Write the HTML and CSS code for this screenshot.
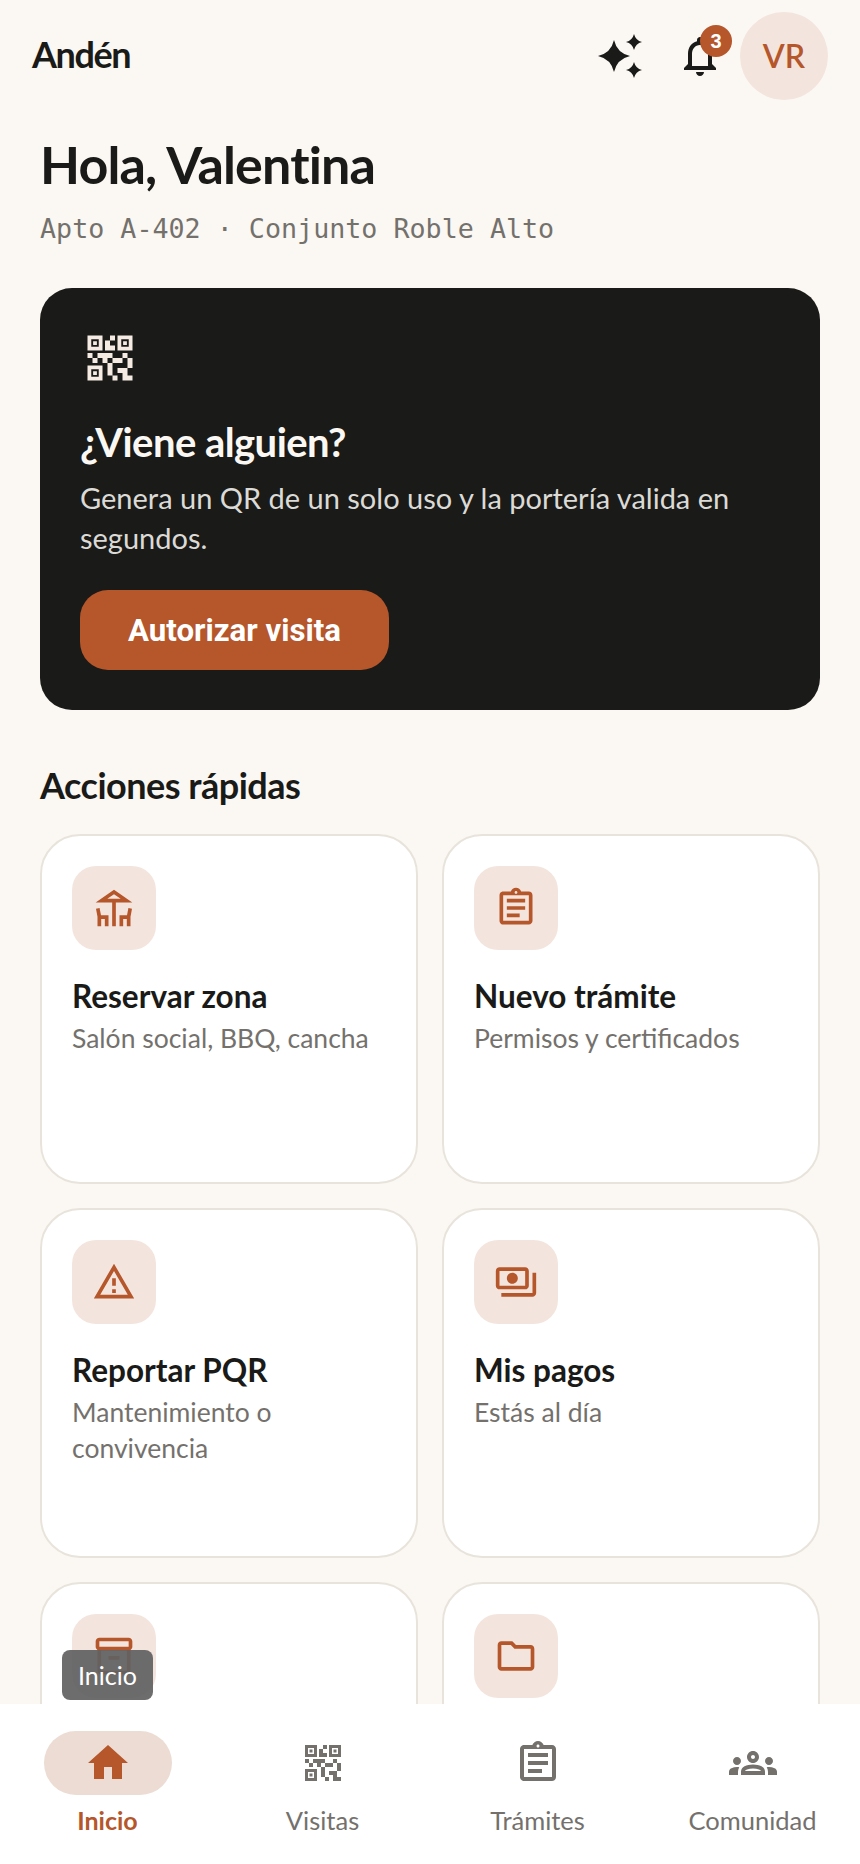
FILE: index.html
```html
<!DOCTYPE html>
<html lang="es">
<head>
  <meta charset="UTF-8">
  <meta name="viewport" content="width=device-width, initial-scale=1.0">
  <title>Andén</title>
  <link rel="stylesheet" href="styles.css">
</head>
<body>
  <svg class="sprites" width="0" height="0" aria-hidden="true">
    <symbol id="i-qr" viewBox="0 0 24 24"><path fill-rule="evenodd" d="M3 3h6v6H3zm1.5 1.5v3h3v-3zm.75.75h1.5v1.5h-1.5zM15 3h6v6h-6zm1.5 1.5v3h3v-3zm.75.75h1.5v1.5h-1.5zM3 15h6v6H3zm1.5 1.5v3h3v-3zm.75.75h1.5v1.5h-1.5z"/><path d="M12 3h2v2h-2zM10 5h2v2h2v2h-4zM3 10h2v2H3zM5 12h2v2H5zM7 10h6v2h-2v2H9v-2H7zM13 12h4v2h-4zM17 10h2v2h-2zM19 12h2v4h-2zM11 14h2v5h-2zM13 19h2v2h-2zM15 16h4v3h2v2h-4v-3h-2z"/></symbol>
    <symbol id="i-assignment" viewBox="0 0 24 24"><path d="M19 3h-4.18C14.4 1.84 13.3 1 12 1c-1.3 0-2.4.84-2.82 2H5c-.14 0-.27.01-.4.04-.39.08-.74.28-1.01.55-.18.18-.33.4-.43.64-.1.23-.16.49-.16.77v14c0 .27.06.54.16.78s.25.45.43.64c.27.27.62.47 1.01.55.13.02.26.03.4.03h14c1.1 0 2-.9 2-2V5c0-1.1-.9-2-2-2zm-7-.25c.41 0 .75.34.75.75s-.34.75-.75.75-.75-.34-.75-.75.34-.75.75-.75zM19 19H5V5h14v14zM7 15h7v2H7zM7 11h10v2H7zM7 7h10v2H7z"/></symbol>
  </svg>

  <header class="topbar">
    <span class="brand">Andén</span>
    <div class="top-actions">
      <button class="icon-btn" aria-label="Asistente">
        <svg class="icon-48" viewBox="0 0 24 24"><path d="M9 4Q10.5 10.5 17 12 10.5 13.5 9 20 7.5 13.5 1 12 7.5 10.5 9 4zM19 1Q19.8 4.2 23 5 19.8 5.8 19 9 18.2 5.8 15 5 18.2 4.2 19 1zM19 15Q19.8 18.2 23 19 19.8 19.8 19 23 18.2 19.8 15 19 18.2 18.2 19 15z"/></svg>
      </button>
      <button class="icon-btn" aria-label="Notificaciones">
        <svg class="icon-48" viewBox="0 0 24 24"><path d="M12 22c1.1 0 2-.9 2-2h-4c0 1.1.9 2 2 2zm6-6v-5c0-3.07-1.64-5.64-4.5-6.32V4c0-.83-.67-1.5-1.5-1.5s-1.5.67-1.5 1.5v.68C7.63 5.36 6 7.92 6 11v5l-2 2v1h16v-1l-2-2zm-2 1H8v-6c0-2.48 1.51-4.5 4-4.5s4 2.02 4 4.5v6z"/></svg>
        <span class="badge">3</span>
      </button>
      <div class="avatar">VR</div>
    </div>
  </header>

  <main class="content">
    <h1 class="greeting">Hola, Valentina</h1>
    <p class="unit">Apto A-402 · Conjunto Roble Alto</p>

    <section class="hero">
      <svg class="hero-icon"><use href="#i-qr"/></svg>
      <h2>¿Viene alguien?</h2>
      <p>Genera un QR de un solo uso y la portería valida en segundos.</p>
      <button class="hero-btn">Autorizar visita</button>
    </section>

    <h3 class="section-title">Acciones rápidas</h3>
    <div class="actions">
      <div class="card">
        <div class="card-icon"><svg viewBox="0 0 24 24"><path fill-rule="evenodd" d="M22 9 12 2 2 9h9v13h2V9h9zM12 4.44 15.66 7H8.34z"/><path d="M4.14 12l-1.96.37.82 4.37V22h2l.02-4H7v4h2v-6H4.9zM19.1 16H15v6h2v-4h1.98l.02 4h2v-5.26l.82-4.37-1.96-.37z"/></svg></div>
        <div class="card-title">Reservar zona</div>
        <div class="card-sub">Salón social, BBQ, cancha</div>
      </div>
      <div class="card">
        <div class="card-icon"><svg><use href="#i-assignment"/></svg></div>
        <div class="card-title">Nuevo trámite</div>
        <div class="card-sub">Permisos y certificados</div>
      </div>
      <div class="card">
        <div class="card-icon"><svg viewBox="0 0 24 24"><path d="M12 5.99 19.53 19H4.47L12 5.99M12 2 1 21h22L12 2zm1 14h-2v2h2v-2zm0-6h-2v4h2v-4z"/></svg></div>
        <div class="card-title">Reportar PQR</div>
        <div class="card-sub">Mantenimiento o convivencia</div>
      </div>
      <div class="card">
        <div class="card-icon"><svg viewBox="0 0 24 24"><path d="M19 14V6c0-1.1-.9-2-2-2H3c-1.1 0-2 .9-2 2v8c0 1.1.9 2 2 2h14c1.1 0 2-.9 2-2zm-2 0H3V6h14v8zm-7-7c-1.66 0-3 1.34-3 3s1.34 3 3 3 3-1.34 3-3-1.34-3-3-3zm13 0v11c0 1.1-.9 2-2 2H4v-2h17V7h2z"/></svg></div>
        <div class="card-title">Mis pagos</div>
        <div class="card-sub">Estás al día</div>
      </div>
      <div class="card">
        <div class="card-icon"><svg viewBox="0 0 24 24"><path d="M20 2H4c-1 0-2 .9-2 2v3.01c0 .72.43 1.34 1 1.69V20c0 1.1 1.1 2 2 2h14c.9 0 2-.9 2-2V8.7c.57-.35 1-.97 1-1.69V4c0-1.1-1-2-2-2zm-1 18H5V9h14v11zm1-13H4V4h16v3zM9 12h6v2H9z"/></svg></div>
      </div>
      <div class="card">
        <div class="card-icon"><svg viewBox="0 0 24 24"><path d="M9.17 6l2 2H20v10H4V6h5.17M10 4H4c-1.1 0-1.99.9-1.99 2L2 18c0 1.1.9 2 2 2h16c1.1 0 2-.9 2-2V8c0-1.1-.9-2-2-2h-8l-2-2z"/></svg></div>
      </div>
    </div>
    <div class="tooltip">Inicio</div>
  </main>

  <nav class="bottom-nav">
    <a class="nav-item active">
      <span class="nav-pill"><svg viewBox="0 0 24 24"><path d="M10 20v-6h4v6h5v-8h3L12 3 2 12h3v8z"/></svg></span>
      <span class="nav-label">Inicio</span>
    </a>
    <a class="nav-item">
      <span class="nav-pill"><svg><use href="#i-qr"/></svg></span>
      <span class="nav-label">Visitas</span>
    </a>
    <a class="nav-item">
      <span class="nav-pill"><svg><use href="#i-assignment"/></svg></span>
      <span class="nav-label">Trámites</span>
    </a>
    <a class="nav-item">
      <span class="nav-pill"><svg viewBox="0 0 24 24"><path d="M4 13c1.1 0 2-.9 2-2s-.9-2-2-2-2 .9-2 2 .9 2 2 2zm1.13 1.1c-.37-.06-.74-.1-1.13-.1-.99 0-1.93.21-2.78.58C.48 14.9 0 15.62 0 16.43V18h4.5v-1.61c0-.83.23-1.61.63-2.29zM20 13c1.1 0 2-.9 2-2s-.9-2-2-2-2 .9-2 2 .9 2 2 2zm4 3.43c0-.81-.48-1.53-1.22-1.85-.85-.37-1.79-.58-2.78-.58-.39 0-.76.04-1.13.1.4.68.63 1.46.63 2.29V18H24v-1.57zm-7.76-2.78c-1.17-.52-2.61-.9-4.24-.9-1.63 0-3.07.39-4.24.9C6.68 14.13 6 15.21 6 16.39V18h12v-1.61c0-1.18-.68-2.26-1.76-2.74zM8.07 16c.09-.23.13-.39.91-.69.97-.38 1.99-.56 3.02-.56s2.05.18 3.02.56c.77.3.81.46.91.69H8.07zM12 8c.55 0 1 .45 1 1s-.45 1-1 1-1-.45-1-1 .45-1 1-1m0-2c-1.66 0-3 1.34-3 3s1.34 3 3 3 3-1.34 3-3-1.34-3-3-3z"/></svg></span>
      <span class="nav-label">Comunidad</span>
    </a>
  </nav>
</body>
</html>
```
FILE: styles.css
```css
* {
  box-sizing: border-box;
}

html, body {
  margin: 0;
  height: 100%;
}

body {
  width: 860px;
  height: 1864px;
  display: flex;
  flex-direction: column;
  overflow: hidden;
  background: #fbf8f3;
  color: #1a1a18;
  font-family: "Lato", "Noto Sans", sans-serif;
}

.sprites {
  position: absolute;
}

/* top bar */
.topbar {
  flex: none;
  height: 112px;
  display: flex;
  align-items: center;
  justify-content: space-between;
  padding: 0 32px;
}

.brand {
  margin-bottom: 4px;
  font-size: 36px;
  font-weight: 700;
  letter-spacing: -1.4px;
}

.top-actions {
  display: flex;
  align-items: center;
}

.icon-btn {
  position: relative;
  width: 80px;
  height: 88px;
  padding: 0;
  border: 0;
  background: none;
  display: flex;
  align-items: center;
  justify-content: center;
  color: #1a1a18;
}

.icon-48 {
  width: 48px;
  height: 48px;
  fill: currentColor;
}

.badge {
  position: absolute;
  left: 40px;
  top: 13px;
  width: 32px;
  height: 32px;
  border-radius: 50%;
  background: #b5562b;
  color: #fff;
  font-size: 20px;
  font-weight: 700;
  line-height: 32px;
  text-align: center;
}

.avatar {
  width: 88px;
  height: 88px;
  border-radius: 50%;
  background: #f3e5dd;
  color: #b5562b;
  font-size: 32px;
  font-weight: 600;
  line-height: 88px;
  text-align: center;
}

/* main */
.content {
  position: relative;
  flex: 1;
  min-height: 0;
  overflow: hidden;
  padding: 22px 40px 0;
}

.greeting {
  margin: 0;
  font-size: 52px;
  font-weight: 700;
  line-height: 60px;
  letter-spacing: -0.85px;
}

.unit {
  margin: 17px 0 0;
  font-family: "DejaVu Sans Mono", "Liberation Mono", monospace;
  font-size: 26.7px;
  line-height: 36px;
  color: #74716d;
}

.hero {
  margin-top: 41px;
  height: 422px;
  padding: 40px;
  border-radius: 32px;
  background: #1a1a18;
  color: #fbf8f3;
}

.hero-icon {
  display: block;
  width: 60px;
  height: 60px;
  fill: #f5ebe2;
}

.hero h2 {
  margin: 28px 0 0;
  font-size: 40px;
  font-weight: 700;
  line-height: 52px;
  letter-spacing: -0.55px;
}

.hero p {
  margin: 10px 0 0;
  font-size: 29px;
  line-height: 40px;
  color: #dcdad6;
}

.hero-btn {
  display: block;
  margin-top: 32px;
  width: 309px;
  height: 80px;
  border: 0;
  border-radius: 28px;
  background: #b5562b;
  color: #fff;
  font-family: "Roboto", sans-serif;
  font-size: 31.2px;
  font-weight: 700;
}

.section-title {
  margin: 53px 0 0;
  font-size: 36px;
  font-weight: 700;
  line-height: 44px;
  letter-spacing: -0.5px;
}

.actions {
  margin-top: 27px;
  display: grid;
  grid-template-columns: 378px 378px;
  grid-auto-rows: 350px;
  gap: 24px;
}

.card {
  padding: 30px;
  border: 2px solid #e8e4dc;
  border-radius: 40px;
  background: #fff;
}

.card-icon {
  width: 84px;
  height: 84px;
  border-radius: 24px;
  background: #f3e5dd;
  display: flex;
  align-items: center;
  justify-content: center;
}

.card-icon svg {
  width: 44px;
  height: 44px;
  fill: #b5562b;
}

.card-title {
  margin-top: 26px;
  font-size: 31.5px;
  font-weight: 700;
  line-height: 40px;
}

.card-sub {
  margin-top: 4px;
  font-size: 26.5px;
  line-height: 36px;
  color: #74716d;
}

.tooltip {
  position: absolute;
  left: 62px;
  top: 1538px;
  width: 91px;
  height: 50px;
  border-radius: 8px;
  background: rgba(97, 97, 97, 0.92);
  color: #fff;
  font-size: 25px;
  line-height: 50px;
  text-align: center;
}

/* bottom nav */
.bottom-nav {
  flex: none;
  height: 160px;
  display: grid;
  grid-template-columns: repeat(4, 1fr);
  padding-top: 27px;
  background: #fff;
}

.nav-item {
  display: flex;
  flex-direction: column;
  align-items: center;
  color: #74716d;
}

.nav-pill {
  width: 128px;
  height: 64px;
  border-radius: 32px;
  display: flex;
  align-items: center;
  justify-content: center;
}

.nav-pill svg {
  width: 48px;
  height: 48px;
  fill: currentColor;
}

.nav-label {
  margin-top: 7px;
  font-size: 25.5px;
  line-height: 36px;
}

.nav-item.active {
  color: #b5562b;
}

.nav-item.active .nav-pill {
  background: #ecdcd3;
}

.nav-item.active .nav-label {
  font-size: 25px;
  font-weight: 700;
}
```
